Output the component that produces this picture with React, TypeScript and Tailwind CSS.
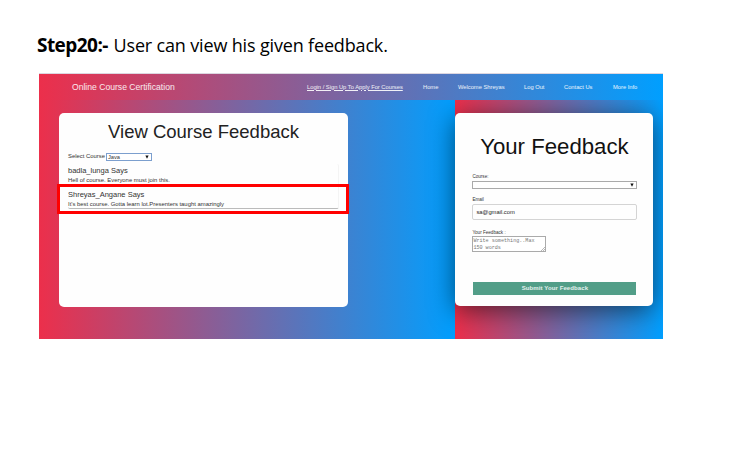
import React from "react";

function Caret({ className = "" }: { className?: string }) {
  return (
    <svg className={className} width="4" height="4" viewBox="0 0 4 4">
      <path d="M.4 .4h3.2L2 3.8z" fill="#111" />
    </svg>
  );
}

function Heading() {
  return (
    <h1 className="flex h-[73px] items-start whitespace-pre pl-[37px] pt-[33px] font-['Open_Sans','Noto_Sans',sans-serif] text-[18px] leading-[24px] text-black">
      <span className="w-[76.5px] text-[19px] font-bold tracking-[-0.55px]">Step20:-</span>
      <span className="tracking-[-0.16px]">User can view his given feedback.</span>
    </h1>
  );
}

function NavBar() {
  return (
    <header className="flex h-[26px] shrink-0 items-center whitespace-nowrap bg-[linear-gradient(to_right,#ec2f4b,#009fff)] pl-[33px] text-white/90">
      <span className="w-[235px] text-[8.6px]">Online Course Certification</span>
      <nav className="flex text-[5.75px]">
        <a className="w-[116px] underline">Login / Sign Up To Apply For Courses</a>
        <a className="w-[35px]">Home</a>
        <a className="w-[66px]">Welcome Shreyas</a>
        <a className="w-[40px]">Log Out</a>
        <a className="w-[49px]">Contact Us</a>
        <a>More Info</a>
      </nav>
    </header>
  );
}

function CourseFeedback() {
  return (
    <section className="relative h-[194px] w-[289px] rounded-[5px] bg-[#fefefe] pl-[9px] text-[#333]">
      <h2 className="-ml-[9px] h-[39px] pt-[8px] text-center text-[18.5px] leading-[22px] text-[#222]">View Course Feedback</h2>
      <div className="flex h-[9px] items-center text-[5.9px]">
        <span className="w-[38px] whitespace-nowrap">Select Course</span>
        <div className="flex h-[8px] w-[46px] items-center justify-between border border-[#7c9fce] bg-white pl-px pr-[2px] text-[5.7px] leading-[6px]">
          Java
          <Caret />
        </div>
      </div>
      <div className="mt-[3px] h-[45px] w-[271px] rounded-[2px] border-b border-r border-b-[#bbb] border-r-[#f4f4f4] pt-[2px]">
        <p className="h-[10px] text-[7.5px] leading-[10px]">badla_lunga Says</p>
        <p className="h-[14px] text-[5.9px] leading-[9px]">Hell of course. Everyone must join this.</p>
        <p className="h-[10px] text-[7.5px] leading-[10px]">Shreyas_Angane Says</p>
        <p className="h-[9px] text-[5.9px] leading-[9px]">It's best course. Gotta learn lot.Presenters taught amazingly</p>
      </div>
      <div className="absolute -left-[2px] top-[71px] h-[30px] w-[292px] border-3 border-[#ff0000]" />
    </section>
  );
}

function FeedbackForm() {
  return (
    <section className="h-[193px] w-[198px] rounded-[5px] bg-[#fefefe] px-[17px] text-[4.6px] text-[#333] shadow-[0_5px_26px_rgba(0,0,0,0.55)]">
      <h2 className="-mx-[17px] h-[60px] pt-[20px] text-center text-[22.2px] leading-[27px] text-[#111]">Your Feedback</h2>
      <label className="block h-[8px] leading-[7px]">Course:</label>
      <div className="flex h-[8px] w-[165px] items-center justify-end border border-[#aaa] bg-white pr-[2px]">
        <Caret />
      </div>
      <label className="block h-[15px] pt-[7px] leading-[7px]">Email</label>
      <div className="flex h-[16px] w-[165px] items-center rounded-[2px] border border-[#d4d4d4] pl-[3px] text-[5.8px] text-[#222]">sa@gmail.com</div>
      <label className="block h-[16px] pt-[9px] leading-[7px]">Your Feedback :</label>
      <div className="relative h-[16px] w-[74px] whitespace-nowrap border border-[#aaa] bg-white pt-px font-['Liberation_Mono',monospace] text-[5.1px] leading-[6.5px] text-[#777]">
        Write something..Max
        <br />
        150 words
        <svg className="absolute bottom-0 right-0" width="4" height="4" viewBox="0 0 4 4">
          <path d="M0 4 4 0M2 4l2-2" stroke="#888" strokeWidth=".6" />
        </svg>
      </div>
      <button className="ml-px mt-[30px] flex h-[13px] w-[163px] items-center justify-center bg-[#529e88] text-[6px] font-bold tracking-[0.1px] text-white/85">
        Submit Your Feedback
      </button>
    </section>
  );
}

export default function App() {
  return (
    <main className="h-[456px] w-[740px] overflow-hidden bg-white">
      <Heading />
      <div className="ml-[39px] flex h-[266px] w-[624px] flex-col overflow-hidden border-t border-[#dcd6e0] font-['Liberation_Sans',Arial,sans-serif]">
        <NavBar />
        <div className="flex h-[239px] overflow-hidden bg-[linear-gradient(to_right,#ec2f4b,#009fff_416.5px,#ec2f4b_416.5px,#009fff_624px)] pt-[13px]">
          <div className="w-[416.4px] pl-[20px]">
            <CourseFeedback />
          </div>
          <FeedbackForm />
        </div>
      </div>
    </main>
  );
}
